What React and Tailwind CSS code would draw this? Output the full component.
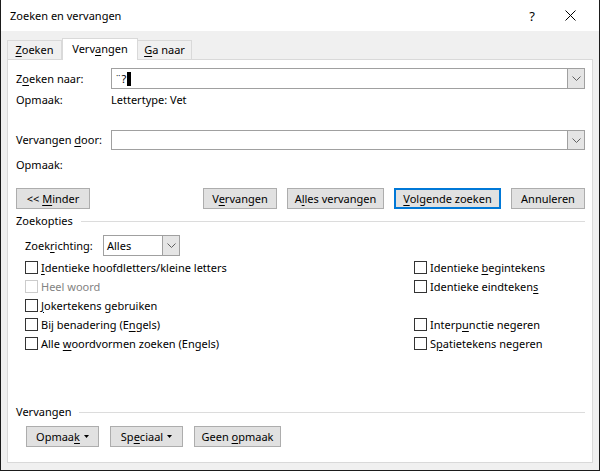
import React from 'react';

const U = ({ children }) => <span className="underline underline-offset-[2px] decoration-1">{children}</span>;

const Chevron = () => (
  <svg width="9" height="5" viewBox="0 0 9 5" className="block">
    <path d="M0.5 0.5 L4.5 4.5 L8.5 0.5" fill="none" stroke="#606060" strokeWidth="1" />
  </svg>
);

const Caret = () => (
  <svg width="5" height="3" viewBox="0 0 5 3" className="ml-[4px] block">
    <path d="M0 0 H5 L2.5 3 Z" fill="#000" />
  </svg>
);

const Btn = ({ w, children, primary }) => (
  <div
    className={`${w} h-[21px] flex items-center justify-center bg-[#e1e1e1] ${
      primary ? 'border-2 border-[#0078d7]' : 'border border-[#adadad]'
    }`}
  >
    {children}
  </div>
);

const Check = ({ children, disabled }) => (
  <div className="h-[19px] flex items-center">
    <div className={`w-[13px] h-[13px] border bg-white ${disabled ? 'border-[#cccccc]' : 'border-[#333333]'}`} />
    <span className={`ml-[3px] ${disabled ? 'text-[#838383]' : ''}`}>{children}</span>
  </div>
);

const Combo = ({ h, children }) => (
  <div className={`flex-1 ${h} flex border border-[#a0a0a0] bg-white`}>
    <div className="flex-1 flex items-center pl-[3px]">{children}</div>
    <div className="w-[17px] flex items-center justify-center bg-[#e5e5e5] border-l border-[#a0a0a0]">
      <Chevron />
    </div>
  </div>
);

export default function App() {
  return (
    <div
      className="w-[600px] h-[471px] flex flex-col bg-[#f0f0f0] border-x border-b border-[#1b1b1b] text-[11px] leading-[16px] text-black"
      style={{ fontFamily: '"Noto Sans", "Open Sans", sans-serif' }}
    >
      <div className="h-[31px] bg-white flex items-center pl-[9px] text-[11px]">
        <span className="flex-1">Zoeken en vervangen</span>
        <span className="w-[20px] text-center text-[13px]">?</span>
        <div className="w-[57px] flex justify-center">
          <svg width="11" height="11" viewBox="0 0 11 11">
            <path d="M0.5 0.5 L10.5 10.5 M10.5 0.5 L0.5 10.5" stroke="#000" strokeWidth="1" />
          </svg>
        </div>
      </div>

      <div className="flex-1 flex flex-col px-[6px] pt-[6px] pb-[7px]">
        <div className="flex items-end h-[22px] relative z-10">
          <div className="h-[19px] w-[55px] flex items-center justify-center border border-b-0 border-[#d9d9d9] bg-[#f0f0f0]">
            <span><U>Z</U>oeken</span>
          </div>
          <div className="h-[22px] w-[76px] -mb-px flex items-center justify-center border border-b-0 border-[#d9d9d9] bg-white pb-[2px]">
            <span>Verv<U>a</U>ngen</span>
          </div>
          <div className="h-[19px] w-[54px] flex items-center justify-center border border-b-0 border-l-0 border-[#d9d9d9] bg-[#f0f0f0]">
            <span><U>G</U>a naar</span>
          </div>
        </div>

        <div className="flex-1 flex flex-col bg-white border border-[#d9d9d9] pl-[8px] pr-[7px] pt-[8px]">
          <div className="flex items-center">
            <div className="w-[95px]">Z<U>o</U>eken naar:</div>
            <Combo h="h-[21px]">
              <span>¨?</span>
              <span className="inline-block w-[4px] h-[14px] bg-black ml-[1px]" />
            </Combo>
          </div>
          <div className="flex items-center h-[20px] mt-[1px]">
            <div className="w-[95px]">Opmaak:</div>
            <div>Lettertype: Vet</div>
          </div>

          <div className="flex items-center mt-[20px]">
            <div className="w-[95px]">Vervangen <U>d</U>oor:</div>
            <Combo h="h-[20px]" />
          </div>
          <div className="flex items-center h-[20px] mt-[5px]">
            <div className="w-[95px]">Opmaak:</div>
          </div>

          <div className="flex items-center mt-[13px]">
            <Btn w="w-[74px]"><span>&lt;&lt; <U>M</U>inder</span></Btn>
            <div className="flex-1" />
            <div className="flex gap-[10px]">
              <Btn w="w-[74px]"><span>V<U>e</U>rvangen</span></Btn>
              <Btn w="w-[97px]"><span>A<U>l</U>les vervangen</span></Btn>
              <Btn w="w-[107px]" primary><span><U>V</U>olgende zoeken</span></Btn>
              <Btn w="w-[74px]"><span>Annuleren</span></Btn>
            </div>
          </div>

          <div className="flex items-center h-[16px] mt-[4px]">
            <span>Zoekopties</span>
            <div className="flex-1 h-px bg-[#dcdcdc] ml-[8px]" />
          </div>

          <div className="pl-[9px] pr-[8px]">
            <div className="flex items-center mt-[6px]">
              <div className="w-[78px]">Zoek<U>r</U>ichting:</div>
              <div className="w-[77px] h-[21px] flex border border-[#a0a0a0] bg-white">
                <div className="flex-1 flex items-center pl-[3px]">Alles</div>
                <div className="w-[17px] flex items-center justify-center bg-[#e5e5e5] border-l border-[#a0a0a0]">
                  <Chevron />
                </div>
              </div>
            </div>

            <div className="flex mt-[2px]">
              <div className="w-[389px] flex flex-col">
                <Check><U>I</U>dentieke hoofdletters/kleine letters</Check>
                <Check disabled>Heel woord</Check>
                <Check><U>J</U>okertekens gebruiken</Check>
                <Check>Bij benadering (E<U>n</U>gels)</Check>
                <Check>Alle <U>w</U>oordvormen zoeken (Engels)</Check>
              </div>
              <div className="flex flex-col">
                <Check>Identieke <U>b</U>egintekens</Check>
                <Check>Identieke eindteken<U>s</U></Check>
                <div className="h-[19px]" />
                <Check>Interp<U>u</U>nctie negeren</Check>
                <Check>S<U>p</U>atietekens negeren</Check>
              </div>
            </div>
          </div>

          <div className="flex-1" />

          <div className="flex items-center h-[16px]">
            <span>Vervangen</span>
            <div className="flex-1 h-px bg-[#dcdcdc] ml-[8px]" />
          </div>
          <div className="flex gap-[11px] pl-[10px] mt-[6px] mb-[15px]">
            <Btn w="w-[73px]"><span>Opmaa<U>k</U></span><Caret /></Btn>
            <Btn w="w-[73px]"><span>Sp<U>e</U>ciaal</span><Caret /></Btn>
            <Btn w="w-[87px]"><span>Geen <U>o</U>pmaak</span></Btn>
          </div>
        </div>
      </div>
    </div>
  );
}
